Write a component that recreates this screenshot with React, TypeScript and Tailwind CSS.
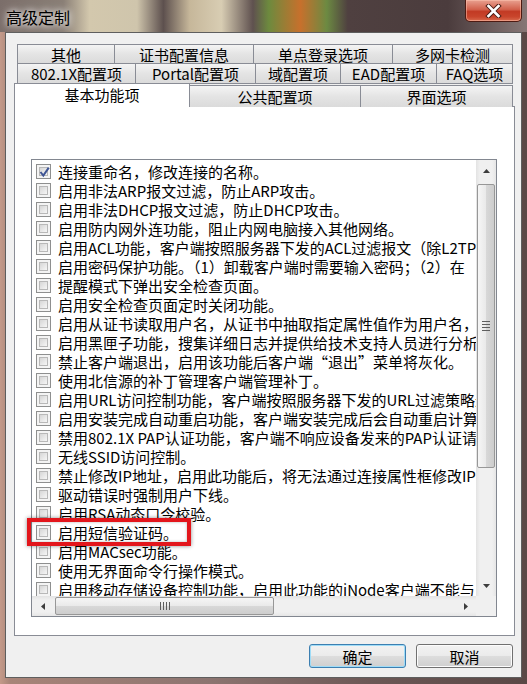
import React from 'react';

const rows = [
  '连接重命名，修改连接的名称。',
  '启用非法ARP报文过滤，防止ARP攻击。',
  '启用非法DHCP报文过滤，防止DHCP攻击。',
  '启用防内网外连功能，阻止内网电脑接入其他网络。',
  '启用ACL功能，客户端按照服务器下发的ACL过滤报文（除L2TP',
  '启用密码保护功能。（1）卸载客户端时需要输入密码；（2）在',
  '提醒模式下弹出安全检查页面。',
  '启用安全检查页面定时关闭功能。',
  '启用从证书读取用户名，从证书中抽取指定属性值作为用户名，',
  '启用黑匣子功能，搜集详细日志并提供给技术支持人员进行分析',
  '禁止客户端退出，启用该功能后客户端“退出”菜单将灰化。',
  '使用北信源的补丁管理客户端管理补丁。',
  '启用URL访问控制功能，客户端按照服务器下发的URL过滤策略过',
  '启用安装完成自动重启功能，客户端安装完成后会自动重启计算',
  '禁用802.1X PAP认证功能，客户端不响应设备发来的PAP认证请',
  '无线SSID访问控制。',
  '禁止修改IP地址，启用此功能后，将无法通过连接属性框修改IP',
  '驱动错误时强制用户下线。',
  '启用RSA动态口令校验。',
  '启用短信验证码。',
  '启用MACsec功能。',
  '使用无界面命令行操作模式。',
  '启用移动存储设备控制功能，启用此功能的iNode客户端不能与',
];

const tabRow1 = [
  { label: '其他', w: 'w-[98px]' },
  { label: '证书配置信息', w: 'w-[140px]' },
  { label: '单点登录选项', w: 'w-[140px]' },
  { label: '多网卡检测', w: 'w-[121px]' },
];

const tabRow2 = [
  { label: '802.1X配置项', w: 'w-[119px]' },
  { label: 'Portal配置项', w: 'w-[121px]' },
  { label: '域配置项', w: 'w-[86px]' },
  { label: 'EAD配置项', w: 'w-[97px]' },
  { label: 'FAQ选项', w: 'w-[77px]' },
];

function Tab({ label, w }: { label: string; w: string }) {
  return (
    <div
      className={`${w} -ml-px first:ml-0 h-full border border-[#898c95] bg-[linear-gradient(#f4f4f4,#e4e4e4_50%,#dbdbdb)] flex items-center justify-center text-[15px] leading-none text-black`}
    >
      {label}
    </div>
  );
}

function Checkbox({ checked }: { checked?: boolean }) {
  return (
    <span className="w-[15px] h-[15px] shrink-0 border border-[#8e8f8f] bg-[#f4f4f4] p-[2px] flex">
      <span className="flex-1 border border-[#b8b8b8] bg-[linear-gradient(135deg,#d6d6d6,#f6f6f6)] relative">
        {checked && (
          <svg viewBox="0 0 11 11" className="absolute -left-[1px] -top-[2px] w-[11px] h-[12px]">
            <path d="M1.5 5.5 L4.3 9 L9.8 1.2" fill="none" stroke="#3f5594" strokeWidth="2" />
          </svg>
        )}
      </span>
    </span>
  );
}

function ArrowUp() {
  return (
    <svg viewBox="0 0 7 4" className="w-[7px] h-[4px]">
      <path d="M0 4 L3.5 0 L7 4Z" fill="#3d3d3d" />
    </svg>
  );
}

function ArrowDown() {
  return (
    <svg viewBox="0 0 7 4" className="w-[7px] h-[4px]">
      <path d="M0 0 L3.5 4 L7 0Z" fill="#3d3d3d" />
    </svg>
  );
}

function ArrowLeft() {
  return (
    <svg viewBox="0 0 4 7" className="w-[4px] h-[7px]">
      <path d="M4 0 L0 3.5 L4 7Z" fill="#3d3d3d" />
    </svg>
  );
}

function ArrowRight() {
  return (
    <svg viewBox="0 0 4 7" className="w-[4px] h-[7px]">
      <path d="M0 0 L4 3.5 L0 7Z" fill="#3d3d3d" />
    </svg>
  );
}

function Button({ label, focused }: { label: string; focused?: boolean }) {
  return (
    <button
      className={`w-[97px] h-[24px] rounded-[3px] border text-[15px] leading-none text-black bg-[linear-gradient(#f2f2f2,#ebebeb_50%,#dddddd_51%,#cfcfcf)] ${
        focused
          ? 'border-[#3c7fb1] shadow-[inset_0_0_0_1px_#9fdcf7]'
          : 'border-[#707070] shadow-[inset_0_0_0_1px_#fcfcfc]'
      }`}
    >
      {label}
    </button>
  );
}

export default function App() {
  return (
    <div className="relative w-[527px] h-[684px] overflow-hidden bg-[linear-gradient(90deg,#c49a8a,#a88478_2%,#8c7470_40%,#6c5856_70%,#5a4846)] font-[family-name:'Noto_Sans_CJK_SC',sans-serif]">
      {/* title bar */}
      <div className="h-[32px] flex justify-between bg-[linear-gradient(90deg,#7b6e6a_0%,#8a7f76_12%,#d3c8ad_17%,#cfc5ac_26%,#5d504e_31%,#c6b79a_36%,#d8cdb3_42%,#5f514f_48%,#6d8a3e_51%,#c7702c_57%,#6c8a42_62%,#4f4040_66%,#4b3c3d_85%,#877776_100%)]">
        <div className="pl-[6px] pt-[7px] text-[16px] leading-[20px] text-black [text-shadow:0_0_6px_#ffffff,0_0_10px_rgba(255,255,255,0.7)]">
          高级定制
        </div>
        <div className="mr-[5px] w-[57px] h-[22px] rounded-b-[5px] border border-t-0 border-[#4d1a12] bg-[linear-gradient(#e9a190,#d2614c_45%,#c23a24_55%,#c9452c_80%,#d86a4e)] shadow-[inset_0_0_0_1px_rgba(255,200,180,0.5)] flex items-center justify-center">
          <svg viewBox="0 0 16 14" className="w-[17px] h-[14px]">
            <path d="M3 2 L13 12 M13 2 L3 12" stroke="#4a1c14" strokeWidth="4.5" strokeLinecap="square" />
            <path d="M3 2 L13 12 M13 2 L3 12" stroke="#ffffff" strokeWidth="2.6" strokeLinecap="square" />
          </svg>
        </div>
      </div>

      {/* client area */}
      <div className="ml-[5px] w-[517px] h-[646px] border border-[#5e5e5e] bg-[#f0f0f0] flex flex-col">
        <div className="pt-[11px] pl-[8px] w-[509px] flex flex-col">
          <div className="ml-[3px] h-[20px] flex">
            {tabRow1.map((t) => (
              <Tab key={t.label} {...t} />
            ))}
          </div>
          <div className="ml-[3px] h-[21px] -mt-px flex">
            {tabRow2.map((t) => (
              <Tab key={t.label} {...t} />
            ))}
          </div>
          <div className="h-[24px] -mt-px flex items-end relative z-10">
            <div className="w-[176px] h-[24px] border border-b-0 border-[#898c95] bg-white flex items-center justify-center text-[15px] leading-none text-black pb-[2px]">
              基本功能项
            </div>
            <div className="w-[172px] h-[22px] -ml-px border border-b-0 border-[#898c95] bg-[linear-gradient(#f4f4f4,#e4e4e4_50%,#dbdbdb)] flex items-center justify-center text-[15px] leading-none text-black">
              公共配置项
            </div>
            <div className="w-[153px] h-[22px] -ml-px border border-b-0 border-[#898c95] bg-[linear-gradient(#f4f4f4,#e4e4e4_50%,#dbdbdb)] flex items-center justify-center text-[15px] leading-none text-black">
              界面选项
            </div>
          </div>
          {/* tab page */}
          <div className="-mt-px w-[501px] h-[530px] border border-[#898c95] bg-white pt-[52px] pl-[16px]">
            {/* list box */}
            <div className="w-[466px] h-[458px] border border-[#828790] grid grid-cols-[1fr_20px] grid-rows-[1fr_20px]">
              <div className="overflow-hidden pt-[2px] pl-[4px]">
                {rows.map((r, i) => (
                  <div key={i} className="h-[19px] flex items-center gap-[7px] whitespace-nowrap">
                    <Checkbox checked={i === 0} />
                    <span className="text-[15px] leading-[19px] text-black">{r}</span>
                  </div>
                ))}
              </div>
              {/* vertical scrollbar */}
              <div className="bg-[linear-gradient(90deg,#e3e3e3,#f0f0f0_20%,#f0f0f0_80%,#e6e6e6)] flex flex-col">
                <div className="h-[22px] flex items-center justify-center">
                  <ArrowUp />
                </div>
                <div className="mt-[2px] h-[284px] mx-[1px] rounded-[2px] border border-[#979797] bg-[linear-gradient(90deg,#f6f6f6,#e9e9e9_50%,#d8d8d8_51%,#cdcdcd)] flex flex-col items-center justify-center gap-[2px]">
                  <span className="w-[8px] h-px bg-[#5e5e5e]" />
                  <span className="w-[8px] h-px bg-[#5e5e5e]" />
                  <span className="w-[8px] h-px bg-[#5e5e5e]" />
                  <span className="w-[8px] h-px bg-[#5e5e5e]" />
                </div>
                <div className="flex-1" />
                <div className="h-[20px] flex items-center justify-center">
                  <ArrowDown />
                </div>
              </div>
              {/* horizontal scrollbar */}
              <div className="bg-[linear-gradient(#e3e3e3,#f0f0f0_20%,#f0f0f0_80%,#e6e6e6)] flex items-center">
                <div className="w-[21px] h-full flex items-center justify-center">
                  <ArrowLeft />
                </div>
                <div className="ml-[2px] w-[219px] h-[18px] rounded-[2px] border border-[#979797] bg-[linear-gradient(#f6f6f6,#e9e9e9_50%,#d8d8d8_51%,#cdcdcd)] flex items-center justify-center gap-[2px]">
                  <span className="w-px h-[8px] bg-[#5e5e5e]" />
                  <span className="w-px h-[8px] bg-[#5e5e5e]" />
                  <span className="w-px h-[8px] bg-[#5e5e5e]" />
                  <span className="w-px h-[8px] bg-[#5e5e5e]" />
                </div>
                <div className="flex-1" />
                <div className="w-[20px] h-full flex items-center justify-center">
                  <ArrowRight />
                </div>
              </div>
              <div className="bg-[#f0f0f0]" />
            </div>
          </div>
        </div>
        {/* buttons */}
        <div className="mt-[8px] pr-[8px] flex justify-end gap-[10px]">
          <Button label="确定" focused />
          <Button label="取消" />
        </div>
      </div>

      {/* annotation */}
      <div className="absolute left-[27px] top-[518px] w-[164px] h-[28px] border-[4px] border-[#e3161c] shadow-[0_0_4px_rgba(0,0,0,0.45),inset_0_0_3px_rgba(0,0,0,0.3)]" />
    </div>
  );
}
